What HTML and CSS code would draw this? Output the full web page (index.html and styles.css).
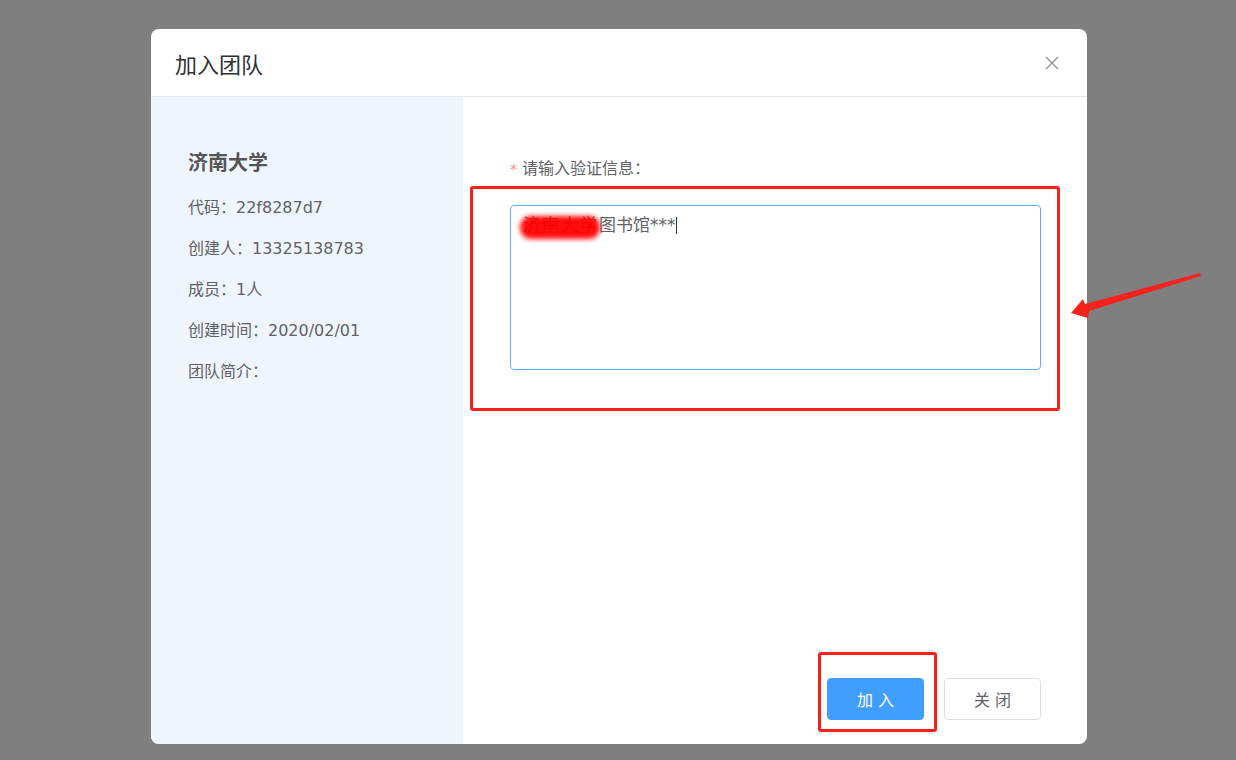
FILE: index.html
```html
<!DOCTYPE html>
<html>
<head>
  <meta charset="UTF-8">
  <title>加入团队</title>
  <link rel="stylesheet" href="styles.css">
</head>
<body>
  <div class="dialog">
    <div class="dialog-header">
      <span class="dialog-title">加入团队</span>
      <svg class="close" width="14" height="14" viewBox="0 0 14 14">
        <path d="M1 1 L13 13 M13 1 L1 13" stroke="#909399" stroke-width="1.4" fill="none"/>
      </svg>
    </div>
    <div class="dialog-body">
      <div class="team-info">
        <h2>济南大学</h2>
        <p>代码：22f8287d7</p>
        <p>创建人：13325138783</p>
        <p>成员：1人</p>
        <p>创建时间：2020/02/01</p>
        <p>团队简介：</p>
      </div>
      <div class="join-form">
        <label class="form-label"><span class="req">*</span> 请输入验证信息：</label>
        <div class="textarea">
          <span class="masked">济南大学<i class="smudge"></i></span>图书馆***<span class="caret"></span>
        </div>
        <div class="actions">
          <button class="btn btn-primary">加 入</button>
          <button class="btn">关 闭</button>
        </div>
      </div>
    </div>
    <!-- 标注 -->
    <div class="mark mark-input"></div>
    <div class="mark mark-btn"></div>
  </div>
  <svg class="arrow" width="150" height="60" viewBox="1060 265 150 60">
    <polygon points="1071,313 1083,299 1085,304 1200,273 1201,276 1089,311 1088,318" fill="#f5231c"/>
  </svg>
</body>
</html>
```

FILE: styles.css
```css
* {
  box-sizing: border-box;
  font-family: "DejaVu Sans", "Noto Sans CJK SC", sans-serif;
}
body {
  margin: 0;
  height: 760px;
  background: #7f7f7f;
  padding: 29px 0 0 151px;
  overflow: hidden;
  position: relative;
}

.dialog {
  position: relative;
  width: 936px;
  height: 715px;
  background: #fff;
  border-radius: 8px;
  display: flex;
  flex-direction: column;
  overflow: hidden;
}

.dialog-header {
  height: 68px;
  flex: none;
  display: flex;
  align-items: center;
  justify-content: space-between;
  padding: 0 28px 0 24px;
  border-bottom: 1px solid #e4e7ed;
}
.dialog-title {
  font-size: 22px;
  color: #303133;
}

.dialog-body {
  flex: 1;
  display: flex;
}

.team-info {
  width: 312px;
  background: #eff5fc;
  padding: 52px 0 0 37px;
  color: #606266;
}
.team-info h2 {
  margin: 0 0 10px;
  font-size: 20px;
  line-height: 28px;
  color: #555;
}
.team-info p {
  margin: 0;
  font-size: 16px;
  line-height: 41px;
}

.join-form {
  flex: 1;
  display: flex;
  flex-direction: column;
  padding: 60px 46px 24px 47px;
}
.form-label {
  font-size: 16px;
  line-height: 24px;
  color: #606266;
}
.req {
  color: #f78989;
  font-size: 14px;
}
.textarea {
  margin-top: 24px;
  height: 165px;
  border: 1px solid #66aaff;
  border-radius: 4px;
  padding: 6px 12px;
  font-size: 17px;
  line-height: 26px;
  color: #606266;
}
.masked {
  position: relative;
  letter-spacing: 2px;
}
.smudge {
  position: absolute;
  left: -3px;
  right: -1px;
  top: 1px;
  height: 23px;
  background: #ff0000;
  border-radius: 11px;
  filter: blur(2.5px);
  opacity: 0.95;
}
.caret {
  display: inline-block;
  width: 1px;
  height: 17px;
  background: #333;
  vertical-align: -3px;
}

.actions {
  margin-top: auto;
  display: flex;
  justify-content: flex-end;
  gap: 20px;
}
.btn {
  width: 97px;
  height: 42px;
  border: 1px solid #dcdfe6;
  border-radius: 4px;
  background: #fff;
  color: #606266;
  font-size: 16px;
}
.btn-primary {
  background: #409eff;
  border-color: #409eff;
  color: #fff;
}

.mark {
  position: absolute;
  border: 3px solid #f5231c;
  border-radius: 3px;
}
.mark-input {
  left: 319px;
  top: 157px;
  width: 590px;
  height: 225px;
}
.mark-btn {
  left: 667px;
  top: 623px;
  width: 119px;
  height: 80px;
}

.arrow {
  position: absolute;
  left: 1060px;
  top: 265px;
}
```
